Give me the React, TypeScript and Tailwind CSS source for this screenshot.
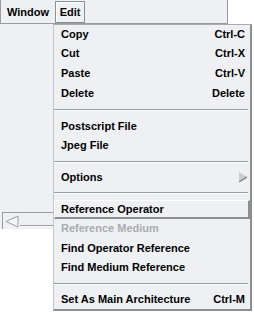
import React from "react";

const font = { fontFamily: '"Liberation Sans", Arial, sans-serif' };

function Item({ label, shortcut, disabled, h = 19 }: { label: string; shortcut?: string; disabled?: boolean; h?: number }) {
  return (
    <div
      className={`flex items-center justify-between pl-[7px] pr-[5px] ${h === 20 ? "h-[20px]" : "h-[19px]"} ${disabled ? "text-[#a9abae]" : "text-black"}`}
    >
      <span>{label}</span>
      {shortcut && <span>{shortcut}</span>}
    </div>
  );
}

function Sep({ top, bottom }: { top: string; bottom: string }) {
  return (
    <div className={`${top} ${bottom} mr-[2px]`}>
      <div className="h-[1px] bg-[#9a9c9f]" />
      <div className="h-[1px] bg-white" />
    </div>
  );
}

export default function App() {
  return (
    <div className="relative w-[254px] h-[313px] bg-white overflow-hidden text-[11px] font-bold leading-none" style={font}>
      {/* Window */}
      <div className="w-[228px] flex flex-col">
        <div className="h-[24px] bg-[#eef0f4] border-l border-l-[#9a9c9f] border-r border-r-[#9a9c9f] border-b border-b-[#9a9c9f] flex items-stretch pt-[1px] pb-[0px]">
          <div className="flex items-center pl-[6px] pr-[6px] text-black">Window</div>
          <div className="flex items-center px-[2px] border border-[#8c8e91] shadow-[inset_1px_1px_0_#ffffff] text-black w-[30px] h-[22px] justify-center">Edit</div>
        </div>
        <div className="h-[188px] bg-[#eef0f4]" />
        <div className="h-[17px] bg-[#eef0f4] flex items-stretch">
          <div className="ml-[2px] flex-1 border-t border-l border-[#9a9c9f] flex items-stretch">
            <div className="w-[17px] flex items-center justify-center">
              <svg width="14" height="13" viewBox="0 0 14 13">
                <polygon points="1,6.5 13,1 13,12" fill="#f3f5f8" stroke="#9a9c9f" strokeWidth="1" />
              </svg>
            </div>
            <div className="flex-1 flex flex-col justify-end pb-[2px]">
              <div className="h-[1px] bg-[#9a9c9f]" />
              <div className="h-[1px] bg-white" />
            </div>
          </div>
        </div>
      </div>

      {/* Dropdown menu */}
      <div className="absolute left-[53px] top-[24px] w-[199px] h-[287px] bg-[#eef0f4] border-t border-t-[#a9abae] border-l border-l-[#c4c6c9] border-r-2 border-r-[#8c8e91] border-b-2 border-b-[#8c8e91] flex flex-col">
        <Item label="Copy" shortcut="Ctrl-C" />
        <Item label="Cut" shortcut="Ctrl-X" />
        <Item label="Paste" shortcut="Ctrl-V" h={20} />
        <Item label="Delete" shortcut="Delete" h={20} />
        <Sep top="pt-[6px]" bottom="pb-[5px]" />
        <Item label="Postscript File" h={20} />
        <Item label="Jpeg File" />
        <Sep top="pt-[6px]" bottom="pb-[4px]" />
        <div className="flex items-center justify-between pl-[7px] pr-[3px] h-[20px] text-black">
          <span>Options</span>
          <svg width="8" height="10" viewBox="0 0 8 10">
            <polygon points="0,0 8,5 0,10" fill="#c9cbce" />
            <line x1="0" y1="10" x2="8" y2="5" stroke="#7c7e81" strokeWidth="1.2" />
          </svg>
        </div>
        <Sep top="pt-[5px]" bottom="pb-[6px]" />
        <div className="flex items-center pl-[7px] h-[19px] border-t border-l border-t-white border-l-white border-r-2 border-b-2 border-r-[#8c8e91] border-b-[#8c8e91] mr-[0px] text-black">
          <span className="-ml-[1px]">Reference Operator</span>
        </div>
        <Item label="Reference Medium" disabled />
        <Item label="Find Operator Reference" h={20} />
        <Item label="Find Medium Reference" />
        <Sep top="pt-[6px]" bottom="pb-[4px]" />
        <Item label="Set As Main Architecture" shortcut="Ctrl-M" h={20} />
      </div>
    </div>
  );
}
